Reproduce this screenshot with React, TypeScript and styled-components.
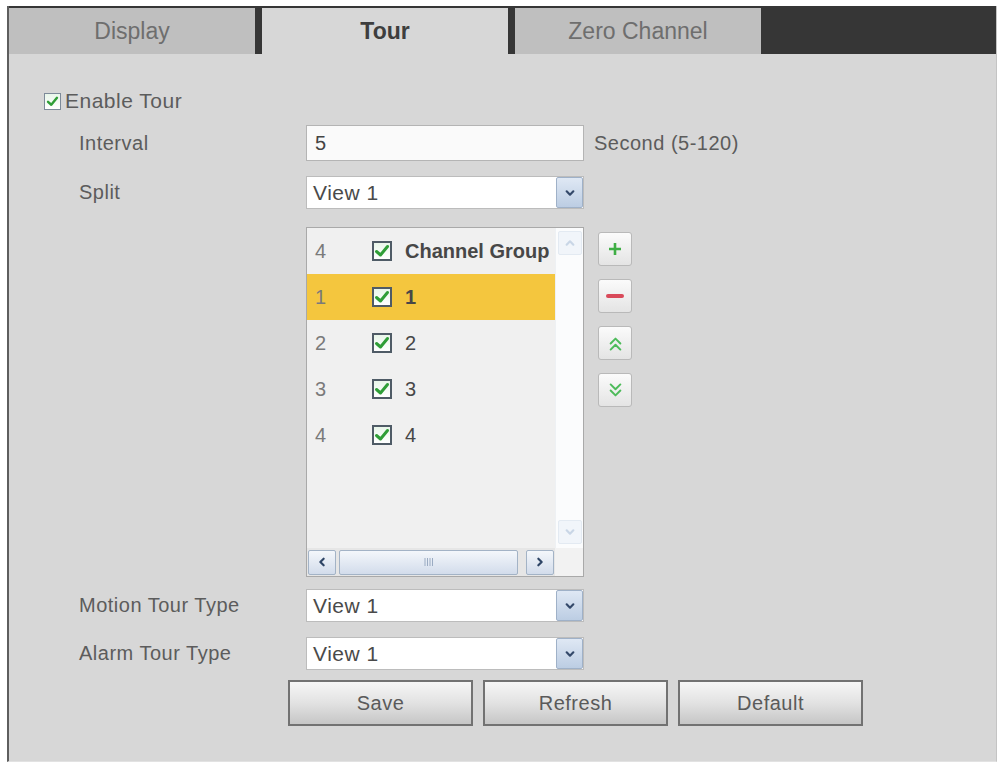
import React from "react";
import styled, { createGlobalStyle } from "styled-components";

const GlobalStyle = createGlobalStyle`
  body {
    margin: 0;
    background: #ffffff;
    font-family: "Liberation Sans", Arial, sans-serif;
  }
`;

const Frame = styled.div`
  margin: 6px 0 0 7px;
  width: 990px;
  height: 756px;
  box-sizing: border-box;
  background: #d7d7d7;
  border-left: 2px solid #5e5e5e;
  border-right: 1px solid #c4c4c4;
  border-bottom: 1px solid #e2e2e2;
  display: flex;
  flex-direction: column;
`;

const TabBar = styled.div`
  height: 48px;
  box-sizing: border-box;
  padding-top: 2px;
  background: #363636;
  display: flex;
  gap: 7px;
`;

const Tab = styled.div<{ $active?: boolean }>`
  width: 246px;
  display: flex;
  align-items: center;
  justify-content: center;
  font-size: 23px;
  background: ${(p) => (p.$active ? "#d7d7d7" : "#bfbfbf")};
  color: ${(p) => (p.$active ? "#3e3e3e" : "#6e6e6e")};
  font-weight: ${(p) => (p.$active ? "bold" : "normal")};
`;

const Content = styled.div`
  padding: 37px 0 0 35px;
  display: flex;
  flex-direction: column;
  color: #5c5c5c;
  font-size: 20px;
  letter-spacing: 0.5px;
`;

const EnableRow = styled.label`
  display: flex;
  align-items: center;
  gap: 4px;
  height: 20px;
  font-size: 21px;
`;

const Form = styled.div`
  margin-left: 35px;
  display: flex;
  flex-direction: column;
`;

const FieldRow = styled.div<{ $top: number }>`
  display: grid;
  grid-template-columns: 227px auto;
  align-items: center;
  margin-top: ${(p) => p.$top}px;
`;

const FieldLabel = styled.div`
  font-size: 20px;
`;

const Inline = styled.div`
  display: flex;
  align-items: center;
  gap: 10px;
`;

const TextBox = styled.div`
  width: 278px;
  height: 36px;
  box-sizing: border-box;
  background: #fafafa;
  border: 1px solid #b4b4b4;
  display: flex;
  align-items: center;
  padding-left: 8px;
  font-size: 20px;
  color: #444;
`;

const Select = styled.div`
  width: 278px;
  height: 33px;
  box-sizing: border-box;
  background: #ffffff;
  border: 1px solid #bcbcbc;
  display: flex;
  align-items: stretch;
  font-size: 21px;
  color: #4a4a4a;
`;

const SelectValue = styled.div`
  flex: 1;
  display: flex;
  align-items: center;
  padding-left: 6px;
`;

const SelectArrow = styled.div`
  width: 27px;
  box-sizing: border-box;
  border: 1px solid #9fb1c8;
  border-radius: 2px;
  background: linear-gradient(#dfe8f4, #bccde3);
  display: flex;
  align-items: center;
  justify-content: center;
`;

const ListArea = styled.div`
  display: flex;
  align-items: flex-start;
  gap: 14px;
`;

const ListBox = styled.div`
  width: 278px;
  height: 350px;
  box-sizing: border-box;
  border: 1px solid #a9a9a9;
  background: #f0f0f0;
  display: grid;
  grid-template-columns: 1fr 28px;
  grid-template-rows: 1fr 28px;
`;

const Rows = styled.div`
  display: flex;
  flex-direction: column;
  overflow: hidden;
`;

const ListRow = styled.div<{ $selected?: boolean; $bold?: boolean }>`
  height: 46px;
  flex-shrink: 0;
  display: flex;
  align-items: center;
  background: ${(p) => (p.$selected ? "#f4c63e" : "transparent")};
  font-size: 20px;
  letter-spacing: 0;
  color: #474747;
  font-weight: ${(p) => (p.$bold ? "bold" : "normal")};
  white-space: nowrap;
`;

const RowIndex = styled.span`
  width: 65px;
  padding-left: 8px;
  box-sizing: border-box;
  color: #7a7a7a;
  font-weight: normal;
`;

const RowText = styled.span`
  margin-left: 13px;
`;

const VScroll = styled.div`
  background: #fbfcfd;
  border-left: 1px solid #eef1f4;
  display: flex;
  flex-direction: column;
  justify-content: space-between;
  align-items: center;
  padding: 3px 0 4px;
`;

const FadedArrow = styled.div`
  width: 22px;
  height: 22px;
  border: 1px solid #e3eaf2;
  background: #f1f5fa;
  border-radius: 2px;
  display: flex;
  align-items: center;
  justify-content: center;
`;

const HScroll = styled.div`
  background: #e6e6e6;
  display: flex;
  align-items: center;
  gap: 2px;
  padding: 1px;
`;

const ScrollBtn = styled.div<{ $grow?: boolean }>`
  ${(p) => (p.$grow ? "flex: 1; margin: 0 6px 0 1px;" : "width: 28px;")}
  height: 25px;
  box-sizing: border-box;
  border: 1px solid #a3b3c6;
  border-radius: 2px;
  background: linear-gradient(#f4f7fb, #d2dceb);
  display: flex;
  align-items: center;
  justify-content: center;
`;

const Corner = styled.div`
  background: #f2f2f2;
`;

const SideButtons = styled.div`
  margin-top: 5px;
  display: flex;
  flex-direction: column;
  gap: 13px;
`;

const SideButton = styled.div`
  width: 34px;
  height: 34px;
  box-sizing: border-box;
  border: 1px solid #b9b9b9;
  border-radius: 3px;
  background: linear-gradient(#fbfbfb, #e4e4e4);
  display: flex;
  align-items: center;
  justify-content: center;
`;

const ButtonRow = styled.div`
  margin: 10px 0 0 244px;
  display: flex;
  gap: 10px;
`;

const ActionButton = styled.div`
  width: 185px;
  height: 46px;
  box-sizing: border-box;
  border: 2px solid #727272;
  background: linear-gradient(#f6f6f6 0%, #e2e2e2 50%, #c6c6c6 100%);
  display: flex;
  align-items: center;
  justify-content: center;
  font-size: 20px;
  color: #5a5a5a;
`;

const CheckBox = styled.span<{ $size: number; $dark?: boolean }>`
  width: ${(p) => p.$size}px;
  height: ${(p) => p.$size}px;
  box-sizing: border-box;
  border: ${(p) => (p.$dark ? "2px solid #4f5b66" : "1px solid #7d8a99")};
  background: linear-gradient(#e9f6ea, #ffffff);
  display: inline-flex;
  align-items: center;
  justify-content: center;
  flex-shrink: 0;
`;

const Check = ({ size, dark }: { size: number; dark?: boolean }) => (
  <CheckBox $size={size} $dark={dark}>
    <svg width={size - 4} height={size - 4} viewBox="0 0 16 16">
      <path d="M2.5 8.5 L6.5 12 L13.5 3.5" fill="none" stroke="#2f9e37" strokeWidth="3" strokeLinecap="round" strokeLinejoin="round" />
    </svg>
  </CheckBox>
);

const Chevron = ({ dir, color, size = 10 }: { dir: "up" | "down" | "left" | "right"; color: string; size?: number }) => {
  const d = {
    down: "M2 4 L6 8 L10 4",
    up: "M2 8 L6 4 L10 8",
    left: "M8 2 L4 6 L8 10",
    right: "M4 2 L8 6 L4 10",
  }[dir];
  return (
    <svg width={size} height={size} viewBox="0 0 12 12">
      <path d={d} fill="none" stroke={color} strokeWidth="2.6" strokeLinecap="round" strokeLinejoin="round" />
    </svg>
  );
};

const DoubleChevron = ({ up }: { up?: boolean }) => (
  <svg width="17" height="17" viewBox="0 0 14 14">
    <path
      d={up ? "M3 7 L7 3 L11 7 M3 12 L7 8 L11 12" : "M3 2 L7 6 L11 2 M3 7 L7 11 L11 7"}
      fill="none"
      stroke="#4dbb5a"
      strokeWidth="1.6"
      strokeLinecap="round"
      strokeLinejoin="round"
    />
  </svg>
);

const DropSelect = ({ value }: { value: string }) => (
  <Select>
    <SelectValue>{value}</SelectValue>
    <SelectArrow>
      <Chevron dir="down" color="#34496a" />
    </SelectArrow>
  </Select>
);

const rows = [
  { idx: "1", label: "1", selected: true, bold: true },
  { idx: "2", label: "2" },
  { idx: "3", label: "3" },
  { idx: "4", label: "4" },
];

export default function App() {
  return (
    <>
      <GlobalStyle />
      <Frame>
        <TabBar>
          <Tab>Display</Tab>
          <Tab $active>Tour</Tab>
          <Tab>Zero Channel</Tab>
        </TabBar>
        <Content>
          <EnableRow>
            <Check size={17} />
            Enable Tour
          </EnableRow>
          <Form>
            <FieldRow $top={14}>
              <FieldLabel>Interval</FieldLabel>
              <Inline>
                <TextBox>5</TextBox>
                <span>Second (5-120)</span>
              </Inline>
            </FieldRow>
            <FieldRow $top={15}>
              <FieldLabel>Split</FieldLabel>
              <DropSelect value="View 1" />
            </FieldRow>
            <FieldRow $top={18}>
              <div />
              <ListArea>
                <ListBox>
                  <Rows>
                    <ListRow $bold>
                      <RowIndex>4</RowIndex>
                      <Check size={20} dark />
                      <RowText>Channel Group</RowText>
                    </ListRow>
                    {rows.map((r) => (
                      <ListRow key={r.idx} $selected={r.selected} $bold={r.bold}>
                        <RowIndex>{r.idx}</RowIndex>
                        <Check size={20} dark />
                        <RowText>{r.label}</RowText>
                      </ListRow>
                    ))}
                  </Rows>
                  <VScroll>
                    <FadedArrow>
                      <Chevron dir="up" color="#c9d6e6" />
                    </FadedArrow>
                    <FadedArrow>
                      <Chevron dir="down" color="#c9d6e6" />
                    </FadedArrow>
                  </VScroll>
                  <HScroll>
                    <ScrollBtn>
                      <Chevron dir="left" color="#2e4566" />
                    </ScrollBtn>
                    <ScrollBtn $grow>
                      <svg width="10" height="8" viewBox="0 0 10 8">
                        <path d="M1 0 V8 M3.5 0 V8 M6 0 V8 M8.5 0 V8" stroke="#9aabc2" strokeWidth="1" />
                      </svg>
                    </ScrollBtn>
                    <ScrollBtn>
                      <Chevron dir="right" color="#2e4566" />
                    </ScrollBtn>
                  </HScroll>
                  <Corner />
                </ListBox>
                <SideButtons>
                  <SideButton>
                    <svg width="16" height="16" viewBox="0 0 16 16">
                      <path d="M8 2 V14 M2 8 H14" stroke="#3fae45" strokeWidth="2.6" />
                    </svg>
                  </SideButton>
                  <SideButton>
                    <svg width="18" height="16" viewBox="0 0 18 16">
                      <path d="M2 8 H16" stroke="#d94a5a" strokeWidth="4" strokeLinecap="round" />
                    </svg>
                  </SideButton>
                  <SideButton>
                    <DoubleChevron up />
                  </SideButton>
                  <SideButton>
                    <DoubleChevron />
                  </SideButton>
                </SideButtons>
              </ListArea>
            </FieldRow>
            <FieldRow $top={12}>
              <FieldLabel>Motion Tour Type</FieldLabel>
              <DropSelect value="View 1" />
            </FieldRow>
            <FieldRow $top={15}>
              <FieldLabel>Alarm Tour Type</FieldLabel>
              <DropSelect value="View 1" />
            </FieldRow>
          </Form>
          <ButtonRow>
            <ActionButton>Save</ActionButton>
            <ActionButton>Refresh</ActionButton>
            <ActionButton>Default</ActionButton>
          </ButtonRow>
        </Content>
      </Frame>
    </>
  );
}
